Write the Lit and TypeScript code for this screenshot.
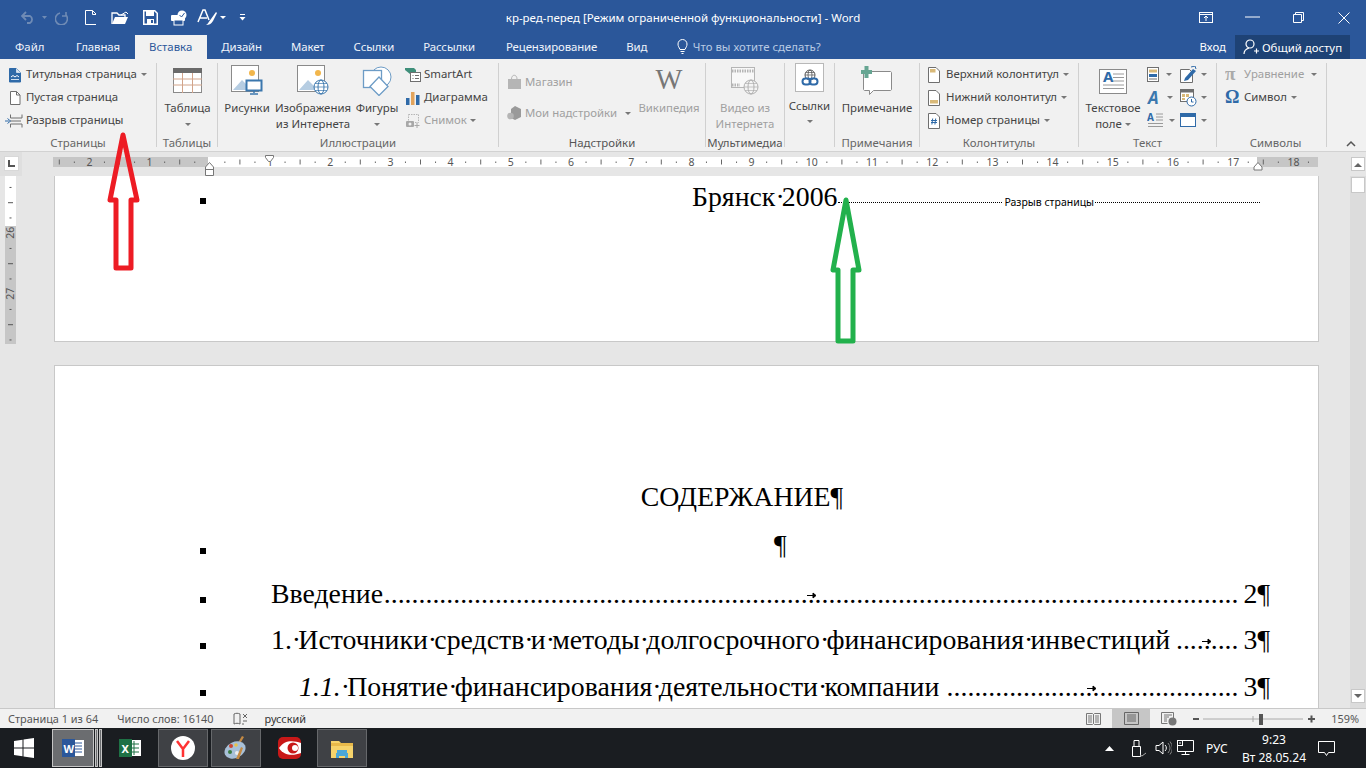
import { LitElement, html, svg, css } from "lit";
import { customElement } from "lit/decorators.js";

const I = (w: number, h: number, body: any) => html`<svg class="svgi" width=${w} height=${h} viewBox="0 0 ${w} ${h}">${body}</svg>`;
const L = "#6f6f6f", B = "#2f6aa8", T = "#d9b978";

const icons: Record<string, any> = {
  cover: I(14, 16, svg`<path d="M1.5 1.5h7l4 4v9.5h-11z" fill="#2f6aa8" stroke="#2f6aa8"/><path d="M8.5 1.5v4h4" fill="#dbe7f3" stroke="#fff" stroke-width=".6"/><path d="M3 10l2-1.5 2 1.5 2-1.5 2 1.5" stroke="#fff" fill="none"/><path d="M3 12.5h8" stroke="#cfe0f0"/>`),
  blank: I(14, 16, svg`<path d="M2.5 1.5h6l3.5 3.5v9.5h-9.5z" fill="#fff" stroke="${L}"/><path d="M8.5 1.5v3.5h3.5" fill="none" stroke="${L}"/>`),
  pbreak: I(18, 16, svg`<path d="M5.5 1.5v3.5h11.5v-3.5M5.5 14.5v-3.5h11.5v3.5" fill="none" stroke="${L}"/><path d="M5 8h11" stroke="${L}"/><path d="M0 8h4M2.5 5.500l3 2.500-3 2.500" fill="none" stroke="${B}"/>`),
  table: I(30, 26, svg`<rect x=".5" y=".5" width="28" height="24" fill="#fff" stroke="#8a8a8a"/><rect x="0" y="0" width="29" height="5" fill="#6a6a6a"/><path d="M0 11h29M0 17h29M9.5 5v20M19.5 5v20" stroke="#d2a48a"/>`),
  pics: I(32, 32, svg`<rect x=".5" y=".5" width="27" height="26" fill="#fff" stroke="#8a8a8a"/><circle cx="21" cy="8" r="3" fill="#f2b64b"/><path d="M2 25l9-10 6 6 3-2 2 6z" fill="#b6cde2"/><rect x="15.5" y="15.5" width="15" height="10" fill="#fff" stroke="#3b77ad" stroke-width="2"/><path d="M23 26v2M19 29h8" stroke="#3b77ad" stroke-width="1.5"/>`),
  online: I(32, 32, svg`<rect x=".5" y=".5" width="27" height="26" fill="#fff" stroke="#8a8a8a"/><circle cx="21" cy="8" r="3" fill="#f2b64b"/><path d="M2 25l9-10 6 6 3-2 2 6z" fill="#b6cde2"/><circle cx="24" cy="22" r="7" fill="#fff" stroke="#3b77ad"/><ellipse cx="24" cy="22" rx="3" ry="7" fill="none" stroke="#3b77ad"/><path d="M17 22h14M18 18.5h12M18 25.5h12" stroke="#3b77ad" stroke-width=".7"/>`),
  shapes: I(32, 30, svg`<circle cx="20" cy="11" r="10" fill="#fff" stroke="#6d9cc6"/><rect x="2.5" y="4.5" width="18" height="17" fill="#fff" stroke="#6d9cc6" stroke-width="1.3"/><path d="M18 11l9 9.5-9 9-9-9z" fill="#fff" stroke="#6d9cc6" stroke-width="1.3"/>`),
  smart: I(16, 16, svg`<path d="M0 1h9l2 2v2l-6 2-5-4z" fill="#3f8f7a"/><rect x="5.5" y="5.5" width="10" height="9" fill="#fff" stroke="${L}"/><path d="M7.5 8.5h1M10 8.5h4M7.5 11.5h1M10 11.5h4" stroke="${L}"/>`),
  chart: I(16, 16, svg`<rect x="1" y="8" width="3.5" height="7" fill="#2f6aa8"/><rect x="6" y="2" width="3.5" height="13" fill="#e2a45c"/><rect x="11" y="5" width="3.5" height="10" fill="#2f6aa8"/>`),
  snap: I(16, 16, svg`<rect x="3.5" y="1.5" width="10" height="8" fill="none" stroke="#b5b5b5" stroke-dasharray="1.5 1"/><rect x="1" y="8" width="8" height="6" rx="1" fill="#a8a8a8"/><circle cx="5" cy="11" r="1.5" fill="#f1f1f1"/><path d="M12 10v5M9.5 12.5h5" stroke="#a8a8a8"/>`),
  store: I(15, 16, svg`<path d="M1 5h13v10h-13z" fill="#b5b5b5"/><path d="M4.5 5c0-5 5.500-5 5.500 0" fill="none" stroke="#b5b5b5"/>`),
  addins: I(15, 16, svg`<path d="M8 1l6 3v8l-6 3-4-2v-9z" fill="#9a9a9a"/><circle cx="3.5" cy="11" r="3.3" fill="#b5b5b5"/>`),
  video: I(28, 28, svg`<rect x=".5" y=".5" width="23" height="20" fill="#f8f8f8" stroke="#b5b5b5"/><path d="M1 4h22" stroke="#b5b5b5" stroke-width="3" stroke-dasharray="1.5 1"/><path d="M1 18h8" stroke="#b5b5b5" stroke-width="3" stroke-dasharray="1.5 1"/><circle cx="20" cy="20" r="7" fill="#f4f4f4" stroke="#b0b0b0"/><ellipse cx="20" cy="20" rx="3" ry="7" fill="none" stroke="#b0b0b0"/><path d="M13 20h14M14 16.5h12M14 23.5h12" stroke="#b0b0b0" stroke-width=".7"/>`),
  links: I(18, 18, svg`<circle cx="9" cy="6" r="5" fill="#fff" stroke="#555"/><ellipse cx="9" cy="6" rx="2" ry="5" fill="none" stroke="#555" stroke-width=".8"/><path d="M4 6h10M5 3.5h8" stroke="#555" stroke-width=".7"/><rect x="1.5" y="9.5" width="8" height="6" rx="3" fill="none" stroke="#2f6aa8" stroke-width="2"/><rect x="8.5" y="9.5" width="8" height="6" rx="3" fill="none" stroke="#2f6aa8" stroke-width="2"/>`),
  comment: I(32, 30, svg`<path d="M3.5 5.5h26a1.5 1.5 0 0 1 1 1v17a1.5 1.5 0 0 1-1 1h-17l-4 4v-4h-5a1.5 1.5 0 0 1-1-1v-17z" fill="#fff" stroke="#8a8a8a"/><path d="M0 4h11v4h-11z" fill="#66a592"/><rect x="3.5" y="0" width="4" height="12" fill="#66a592"/>`),
  header: I(12, 16, svg`<path d="M.5 .5h7.5l3.5 3.5v11.5h-11z" fill="#fff" stroke="${L}"/><rect x="2" y="2" width="5.5" height="3.5" fill="${T}"/>`),
  footer: I(12, 16, svg`<path d="M.5 .5h7.5l3.5 3.5v11.5h-11z" fill="#fff" stroke="${L}"/><rect x="2" y="10" width="8" height="3.5" fill="${T}"/>`),
  pnum: I(12, 16, svg`<path d="M.5 .5h7.5l3.5 3.5v11.5h-11z" fill="#fff" stroke="${L}"/><path d="M4.7 5.5l-.8 6M7.7 5.5l-.8 6M3 7.5h6M3 9.5h6" stroke="#2f6aa8"/>`),
  textbox: I(29, 25, svg`<rect x=".5" y=".5" width="27" height="24" fill="#fff" stroke="#8a8a8a"/><text x="4" y="13" class="ita" fill="#2f6aa8">A</text><path d="M14 5h11M14 8.5h11M14 12h11M4 16h21M4 19.5h21" stroke="#9a9a9a"/>`),
  qparts: I(14, 16, svg`<rect x=".5" y=".5" width="11" height="14" fill="#fff" stroke="${L}"/><rect x="2" y="2.5" width="8" height="3" fill="${T}"/><rect x="2" y="7" width="8" height="3" fill="#2f6aa8"/><path d="M2 12h8" stroke="${L}"/>`),
  wordart: I(16, 16, svg`<text x="1" y="14" class="wa">A</text>`),
  dropcap: I(18, 17, svg`<text x="0" y="9" class="ita2" fill="#2f6aa8">A</text><path d="M9 2h7M9 5h7M9 8h7M1 11.5h15M1 14.5h15" stroke="#9a9a9a"/>`),
  sign: I(17, 17, svg`<path d="M.5 3.5h9l3 3v10h-12z" fill="#fff" stroke="${L}"/><path d="M5 12l8-9 3 2-8 9-4 1z" fill="#2f6aa8"/><path d="M11 1l4-1 1 3" fill="none" stroke="#2f6aa8"/>`),
  date: I(17, 18, svg`<rect x=".5" y=".5" width="13" height="12" fill="#fff" stroke="${L}"/><path d="M0 2h14" stroke="${L}" stroke-width="3"/><rect x="2" y="5" width="3" height="3" fill="${T}"/><rect x="6" y="5" width="3" height="3" fill="${T}"/><rect x="2" y="9" width="3" height="2" fill="${T}"/><circle cx="11.5" cy="12.5" r="4.5" fill="#fff" stroke="#2f6aa8"/><path d="M11.5 10v3h2" stroke="#2f6aa8" fill="none"/>`),
  obj: I(17, 15, svg`<rect x=".5" y=".5" width="15" height="13" fill="#fff" stroke="#2f6aa8"/><rect x="0" y="0" width="16" height="4" fill="#2f6aa8"/>`),
};

const caret = html`<span class="caret"></span>`;
const row = (ic: string, t: string, c = true, cls = "") => html`<div class="row ${cls}">${icons[ic]}${t ? html`<span class="tx">${t}</span>` : ""}${c ? caret : ""}</div>`;
const md = (s: string) => s.split("·").map((p, i) => i === 0 ? p : html`<span class="md">·</span>${p}`);

const rulerMarks = () => {
  const out: any[] = [];
  const X0 = 209.8, P = 60.2, off = 53;
  for (let i = -3; i <= 18; i++) {
    const x = X0 + P * i - off;
    if (i !== 0 && i >= -2) out.push(svg`<text x=${x} y="14" class="rn" text-anchor="middle">${Math.abs(i)}</text>`);
    [[.25, 0], [.5, 1], [.75, 0]].forEach(([f, big]) => {
      const tx = x + P * f;
      if (tx > 1 && tx < 1264) out.push(svg`<rect x=${tx - .5} y=${big ? 7.5 : 9.5} width="1" height=${big ? 5 : 1.5} fill="#666"></rect>`);
    });
  }
  return out;
};

const tocRows = [
  { lead: "Введение", num: "2", arrow: 812, cls: "r1" },
  { lead: "1.·Источники·средств·и·методы·долгосрочного·финансирования·инвестиций ", num: "3", arrow: 1207, cls: "r2" },
  { it: "1.1.", lead: "·Понятие·финансирования·деятельности·компании ", num: "3", arrow: 1092, cls: "r3" },
];

@customElement("app-root")
export class AppRoot extends LitElement {
  static styles = css`
    :host { display:block; position:relative; width:1366px; height:768px; overflow:hidden; font-family:"Noto Sans","Open Sans",sans-serif; font-size:11.4px; color:#444; background:#e6e6e6; }
    .svgi { display:block; flex:none; }
    .app { display:flex; flex-direction:column; height:768px; }
    .title { height:35px; background:#2b579a; color:#fff; display:flex; align-items:center; flex:none; position:relative; }
    .qat { display:flex; align-items:center; padding-left:21px; width:500px; }
    .qb { display:flex; align-items:center; justify-content:center; }
    .q1{width:15px}.q3{width:13px}.q5{width:11px}
    .s6{width:6px;flex:none}.s7{width:7px;flex:none}.s15{width:15px;flex:none}.s13{width:13px;flex:none}.s9{width:9px;flex:none}.s3{width:3px;flex:none}.s14{width:14px;flex:none}.s17{width:17px;flex:none}
    .ttext { position:absolute; inset:0; display:flex; align-items:center; justify-content:center; font-size:11.5px; color:#fff; pointer-events:none; }
    .win { margin-left:auto; display:flex; align-items:center; margin-right:-1px; }
    .wb { width:46px; display:flex; justify-content:center; }
    .tabs { height:24px; background:#2b579a; display:flex; align-items:stretch; flex:none; color:#fff; }
    .tab { padding:0 14.5px 1px; display:flex; align-items:center; justify-content:center; color:#f0f4fa; letter-spacing:-.1px; }
    .tab.file { padding-left:15px; padding-right:17px; letter-spacing:0; }
    .tab.on { background:#f1f1f1; color:#2b579a; padding-right:14.5px; letter-spacing:0; }
    .tab.wide { padding-right:16.5px; }
    .tell { display:flex; align-items:center; gap:5px; margin-left:15px; color:#b9cbe4; padding-bottom:1px; }
    .auth { margin-left:auto; display:flex; align-items:stretch; margin-right:16px; }
    .enter { display:flex; align-items:center; margin-right:9px; padding-bottom:1px; }
    .share { width:115px; background:#1e4275; display:flex; align-items:center; justify-content:center; gap:3px; }
    .ribbon { height:93px; background:#f1f1f1; border-bottom:1px solid #d2d2d2; box-sizing:border-box; flex:none; display:flex; padding-top:4px; position:relative; }
    .group { height:84px; border-right:1px solid #d0d0d0; box-sizing:border-box; display:flex; flex-direction:column; flex:none; }
    .gc { height:72px; display:flex; flex:none; }
    .glabel { height:16px; line-height:16px; text-align:center; color:#666; flex:none; }
    .dk { color:#555; }
    .g1{width:157px}.g2{width:61px}.g3{width:281px}.g4{width:207px}.g5{width:79px}.g6{width:50px}.g7{width:85px}.g8{width:159px}.g9{width:138px}.g10{width:110px}
    .pl8 .gc { padding-left:8px; }
    .col { display:flex; flex-direction:column; }
    .row { display:flex; align-items:center; height:23px; gap:4px; white-space:nowrap; flex:none; }
    .brk { margin-left:-3px; gap:3px; }
    .tx { padding-bottom:2px; }
    .caret { display:inline-block; width:0; height:0; border:3px solid transparent; border-top:3.5px solid #777; border-bottom:0; flex:none; }
    .dis { color:#a0a0a0; }
    .lg { display:flex; flex-direction:column; align-items:center; flex:none; line-height:16px; white-space:nowrap; }
    .lgi { height:36px; display:flex; align-items:center; justify-content:center; flex:none; padding-bottom:1px; }
    .w54{width:54px}.w78{width:78px}.w50{width:50px}.w58{width:58px}.w49{width:49px}.w84{width:84px}.w68{width:68px}
    .ml3 { margin-left:3px; }
    .ml2 { margin-left:2px; }
    .tight .row { gap:3px; }
    .addcol { padding:3.5px 0 0 8px; width:124px; }
    .addcol .row { height:31px; gap:3px; }
    .addcaret { margin-left:5px; }
    .wiki { width:76px; }
    .wglyph { font-family:"Liberation Serif",serif; font-size:28.5px; color:#777; line-height:34px; height:37px; box-sizing:border-box; }
    .box { width:29px; height:29px; background:#fff; border:1px solid #b8b8b8; box-sizing:border-box; display:flex; align-items:center; justify-content:center; }
    .lgi.s { height:35px; padding:0; align-items:flex-start; }
    .links { line-height:15px; }
    .car2 { height:16px; display:flex; align-items:center; }
    .inl { display:inline-flex; align-items:center; gap:3px; }
    .col2 { width:33px; }
    .col3 { width:30px; }
    .col2 .row { width:25px; justify-content:space-between; }
    .col3 .row { width:27px; justify-content:space-between; }
    .wcap .row { gap:6px; }
    .wcap .caret { margin-left:-2px; }
    .pad8 { padding-left:8px; }
    .eqc { margin-left:3px; }
    .pi { font:bold 19px "Liberation Serif",serif; fill:#aaa; }
    .om { font:bold 18px "Liberation Serif",serif; fill:#2f6aa8; }
    .chev { position:absolute; right:10px; top:81px; }
    .rulers { height:24px; flex:none; background:#e6e6e6; display:flex; align-items:flex-start; }
    .corner { width:22px; height:24px; background:#dfdfdf; flex:none; padding:4px 0 0 4px; box-sizing:border-box; margin-right:31px; }
    .corner div { width:15px; height:15px; background:#fff; display:flex; align-items:center; justify-content:center; box-sizing:border-box; border:1px solid #d8d8d8; }
    .rn { font:10.5px "Noto Sans",sans-serif; fill:#555; }
    .ita { font:bold 15px "Noto Sans",sans-serif; }
    .ita2 { font:bold 10px "Noto Sans",sans-serif; }
    .wa { font:italic bold 17px "Noto Sans",sans-serif; fill:#3b77ad; }
    .work { flex:1; display:flex; min-height:0; }
    .gutter { width:54px; flex:none; padding-left:5px; box-sizing:border-box; }
    .vr { width:11px; height:168px; background:#c6c6c6; display:block; }
    .vrn { font:10.5px "Noto Sans",sans-serif; fill:#555; }
    .doc { width:1265px; flex:none; overflow:hidden; }
    .page { background:#fff; border:1px solid #c8c8c8; box-sizing:border-box; font-family:"Liberation Serif",serif; color:#000; font-size:27.8px; position:relative; }
    .md { letter-spacing:-.1em; }
    .p1 { height:166px; border-top:0; margin-bottom:23px; padding:5px 58px 0 145px; }
    .brow { display:flex; align-items:center; height:40px; }
    .bullet { width:6px; height:6px; background:#000; flex:none; }
    .bx { margin-left:486px; white-space:nowrap; margin-bottom:8px; }
    .dotline { flex:1; border-top:1px dotted #000; height:0; display:flex; justify-content:center; margin-top:3px; margin-left:1px; }
    .pb { font:10.5px "Noto Sans",sans-serif; background:#fff; padding:0 1px; color:#000; transform:translateY(-7px); height:13px; line-height:13px; }
    .p2 { height:360px; padding:107px 48px 0 145px; }
    .r { display:flex; align-items:center; height:46.67px; white-space:nowrap; position:relative; }
    .r .bullet { margin-top:12px; }
    .rc { justify-content:center; padding-left:14px; height:47px; }
    .rp { height:50.5px; }
    .rp .bullet { margin-top:12px; }
    .rt { margin-left:65px; white-space:pre; }
    .r2 .rt { margin-left:65px; }
    .r3 .rt { margin-left:93px; }
    .dots { flex:1; overflow:hidden; text-align:right; direction:rtl; min-width:0; }
    .num { margin-left:5px; }
    .par { margin-left:568px; }
    .arrow { position:absolute; top:21px; }
    i { font-style:italic; }
    .scroll { width:16px; margin-left:31px; flex:none; background:#dcdcdc; position:relative; display:flex; flex-direction:column; align-items:center; }
    .sb { width:14px; height:14px; background:#fff; border:1px solid #c8c8c8; box-sizing:border-box; display:flex; align-items:center; justify-content:center; flex:none; }
    .sthumb { height:16px; margin-top:1px; }
    .sup { margin-top:-19px; margin-bottom:5px; }
    .sdown { margin-top:auto; margin-bottom:5px; }
    .status { height:20px; flex:none; background:#f1f1f1; border-top:1px solid #c8c8c8; box-sizing:border-box; display:flex; align-items:center; padding-left:8px; color:#555; font-size:10.9px; }
    .status > span { white-space:nowrap; }
    .m19 { margin-left:19px; }
    .lang { color:#333; margin-left:17px; }
    .sr { margin-left:auto; display:flex; align-items:center; height:100%; }
    .sv { width:38px; height:19px; display:flex; align-items:center; justify-content:center; flex:none; }
    .sv.on { background:#c6c6c6; }
    .zoom { display:flex; align-items:center; margin-left:5px; }
    .pct { margin:0 7px 0 16px; }
    .taskbar { height:40px; flex:none; background:#1a1d21; display:flex; align-items:center; color:#fff; }
    .tbi { display:flex; align-items:center; justify-content:center; height:38px; box-sizing:border-box; flex:none; }
    .start { width:48px; margin-right:4px; }
    .tword { width:42px; background:#6b6d70; border:1px solid #c5c5c5; }
    .stk { width:3px; height:38px; background:#6b6d70; border:1px solid #c5c5c5; box-sizing:border-box; margin-left:1px; flex:none; }
    .texcel { width:50px; margin-left:3px; }
    .tbox { width:50px; background:#3f4145; border:1px solid #66686b; margin-left:3px; }
    .tred { width:56px; }
    .texp { margin-left:0; }
    .tl { font:bold 11px "Noto Sans",sans-serif; fill:#fff; }
    .tray { margin-left:auto; display:flex; align-items:center; }
    .m1 { margin-right:10px; }
    .tu { margin-left:7px; }
    .ts { margin-left:8px; }
    .tn { margin-left:5px; }
    .rus { margin-left:12px; width:26px; font-size:12px; }
    .clock { width:84px; text-align:center; line-height:18px; font-size:12px; padding-top:1px; }
    .notif { margin:0 31px 0 2px; }
    .over { position:absolute; left:0; top:0; pointer-events:none; }
  `;

  render() {
    return html`<div class="app">
      ${this.titlebar()}
      ${this.tabs()}
      ${this.ribbon()}
      <div class="rulers">
        <div class="corner"><div><svg width="7" height="7"><path d="M1 0v6h6" stroke="#555" stroke-width="2" fill="none"/></svg></div></div>
        <svg width="1266" height="24" viewBox="0 0 1266 24">
          <rect x="0" y="5" width="155" height="10" fill="#c6c6c6"/><rect x="155" y="5" width="1049" height="10" fill="#fff"/><rect x="1204" y="5" width="61" height="10" fill="#c6c6c6"/>
          ${rulerMarks()}
          <path d="M212.5 3.5h8v2l-3 4h-2l-3-4z" fill="#fff" stroke="#777"/>
          <path d="M152.5 15l4-4.5 4 4.5v8.5h-8zM152.5 17.5h8" fill="#fff" stroke="#777"/>
          <path d="M1201 18l0-3 4-4.5 4 4.5v3z" fill="#fff" stroke="#777"/>
        </svg>
      </div>
      <div class="work">
        <div class="gutter">${this.vruler()}</div>
        <div class="doc">
          <div class="page p1"><div class="brow"><span class="bullet"></span><span class="bx">${md("Брянск·2006")}</span><span class="dotline"><span class="pb">Разрыв страницы</span></span></div></div>
          <div class="page p2">
            <div class="r rc">СОДЕРЖАНИЕ¶</div>
            <div class="r rp"><span class="bullet"></span><span class="par">¶</span></div>
            ${tocRows.map(r => html`<div class="r ${r.cls}"><span class="bullet"></span><span class="rt">${r.it ? html`<i>${r.it}</i>` : ""}${md(r.lead)}</span><span class="dots">${".".repeat(140)}</span><span class="num">${r.num}¶</span>
              <svg class="arrow" style="left:${r.arrow - 205}px" width="10" height="7"><path d="M0 3.5h7M6 1l3 2.5-3 2.5z" stroke="#000" fill="#000"/></svg></div>`)}
          </div>
        </div>
        <div class="scroll">
          <div class="sb sup"><svg width="8" height="5"><path d="M0 5l4-4 4 4z" fill="#666"/></svg></div>
          <div class="sb sthumb"></div>
          <div class="sb sdown"><svg width="8" height="5"><path d="M0 0l4 4 4-4z" fill="#666"/></svg></div>
        </div>
      </div>
      ${this.status()}
      ${this.taskbar()}
    </div>
    <svg class="over" width="1366" height="768" viewBox="0 0 1366 768" fill="none" stroke-width="5" stroke-linejoin="round">
      <path d="M123 135 110 200h6v68h15v-68h6z" stroke="#ed1c24"/>
      <path d="M846 200 833 270h5v71h15v-71h6z" stroke="#22b14c"/>
    </svg>`;
  }

  vruler() {
    const marks: any[] = [];
    const y26 = 56.7, P = 61;
    for (let i = -1; i <= 2; i++) {
      const y = y26 + P * i;
      if (i === 0 || i === 1) marks.push(svg`<text transform="translate(9 ${y}) rotate(-90)" class="vrn" text-anchor="middle">${26 + i}</text>`);
      [[.25, 0], [.5, 1], [.75, 0]].forEach(([f, b]) => {
        const ty = y + P * f;
        if (ty > 0 && ty < 168) marks.push(svg`<rect x=${b ? 3 : 4.5} y=${ty} width=${b ? 5 : 2} height="1" fill="#555"></rect>`);
      });
    }
    return html`<svg class="vr" width="11" height="168" viewBox="0 0 11 168"><rect width="11" height="50" fill="#fff"/>${marks}</svg>`;
  }

  titlebar() {
    const f = "#6f8bb5";
    return html`<div class="title">
      <div class="qat">
        <span class="qb q1"><svg width="15" height="13"><path d="M5 1 1 5l4 4M1 5h8a4 4 0 0 1 0 7H6" fill="none" stroke="${f}" stroke-width="1.8"/></svg></span>
        <span class="s6"></span><svg width="6" height="4"><path d="M0 0h5l-2.5 3z" fill="${f}"/></svg>
        <span class="s7"></span>
        <span class="qb q3"><svg width="14" height="14"><path d="M5 2a6 6 0 1 0 6 2M11 1v4h-4" fill="none" stroke="${f}" stroke-width="1.6"/></svg></span>
        <span class="s17"></span>
        <span class="qb q5"><svg width="12" height="15"><path d="M.5 .5h7l4 4v10h-11z" fill="none" stroke="#fff"/><path d="M7.5 .5v4h4" fill="none" stroke="#fff"/></svg></span>
        <span class="s15"></span>
        <svg width="18" height="14"><path d="M1 13V2h5l2 2h6v2" fill="none" stroke="#fff" stroke-width="1.3"/><path d="M1 13l3-7h13l-3 7z" fill="#fff"/><path d="M10 4l5-3 2 2" stroke="#fff" fill="none"/></svg>
        <span class="s14"></span>
        <svg width="15" height="15"><path d="M.75 .75h11l2.5 2.5v11h-13.5z" fill="none" stroke="#fff" stroke-width="1.5"/><rect x="3" y="1" width="8" height="5" fill="#fff"/><rect x="4" y="9" width="7" height="5" fill="#fff"/><rect x="8" y="10" width="2" height="3" fill="#2b579a"/></svg>
        <span class="s13"></span>
        <svg width="17" height="16"><rect x="0" y="5" width="14" height="6" rx="1" fill="#fff"/><rect x="3" y="10" width="9" height="5" fill="#2b579a" stroke="#fff"/><circle cx="11" cy="5" r="4.5" fill="#fff"/><path d="M8.5 5l2 2 3-4" stroke="#2b579a" fill="none"/></svg>
        <span class="s9"></span>
        <svg width="20" height="18"><path d="M1 13 6 1h2l4 10M3 9h7" fill="none" stroke="#fff" stroke-width="1.5"/><path d="M9 16c2-1 3-4 5-6l5-7 1 1-4 8c-2 3-4 4-7 4z" fill="#fff"/></svg>
        <span class="s3"></span>
        <svg width="6" height="4"><path d="M0 0h6l-3 3z" fill="#fff"/></svg>
        <span class="s13"></span>
        <svg width="7" height="7"><path d="M1 .5h5" stroke="#fff"/><path d="M.5 3h6l-3 3.5z" fill="#fff"/></svg>
      </div>
      <div class="ttext">кр-ред-перед [Режим ограниченной функциональности] - Word</div>
      <div class="win">
        <span class="wb"><svg width="14" height="11"><rect x=".5" y=".5" width="13" height="10" fill="none" stroke="#fff"/><path d="M0 2.5h14M7 9V4M5 6l2-2 2 2" stroke="#fff" fill="none"/></svg></span>
        <span class="wb"><svg width="15" height="3"><path d="M0 1h15" stroke="#fff"/></svg></span>
        <span class="wb"><svg width="11" height="11"><path d="M.5 2.5h8v8h-8zM2.5 2.5v-2h8v8h-2" fill="none" stroke="#fff"/></svg></span>
        <span class="wb"><svg width="12" height="12"><path d="M.5 .5l11 11M11.5 .5l-11 11" stroke="#fff"/></svg></span>
      </div>
    </div>`;
  }

  tabs() {
    const rest = ["Дизайн", "Макет", "Ссылки"];
    return html`<div class="tabs">
      <div class="tab file">Файл</div>
      <div class="tab">Главная</div>
      <div class="tab on">Вставка</div>
      ${rest.map(x => html`<div class="tab">${x}</div>`)}
      <div class="tab wide">Рассылки</div>
      <div class="tab">Рецензирование</div>
      <div class="tab">Вид</div>
      <div class="tell"><svg width="11" height="15"><path d="M3 10.5C2 8 1 7.5 1 5a4.5 4.5 0 0 1 9 0c0 2.500-1 3-2 5.500zM3.500 12.500h4M4.500 14.500h2" fill="none" stroke="#fff"/></svg><span>Что вы хотите сделать?</span></div>
      <div class="auth"><div class="enter">Вход</div>
        <div class="share"><svg width="16" height="16"><circle cx="7" cy="5" r="4" fill="none" stroke="#fff" stroke-width="1.2"/><path d="M1 15c0-3 2-5 5-6M11 12h5M13.5 9.5v5" fill="none" stroke="#fff" stroke-width="1.2"/></svg><span>Общий доступ</span></div></div>
    </div>`;
  }

  ribbon() {
    return html`<div class="ribbon">
      <div class="group g1 pl8"><div class="gc"><div class="col">
        ${row("cover", "Титульная страница")}${row("blank", "Пустая страница", false)}${row("pbreak", "Разрыв страницы", false, "brk")}
      </div></div><div class="glabel">Страницы</div></div>

      <div class="group g2"><div class="gc"><div class="lg w58"><div class="lgi ml3">${icons.table}</div><span class="ml3">Таблица</span><span class="car2 ml3">${caret}</span></div></div><div class="glabel">Таблицы</div></div>

      <div class="group g3"><div class="gc">
        <div class="lg w54 ml2"><div class="lgi">${icons.pics}</div><span>Рисунки</span></div>
        <div class="lg w78"><div class="lgi">${icons.online}</div><span>Изображения</span><span>из Интернета</span></div>
        <div class="lg w50"><div class="lgi">${icons.shapes}</div><span>Фигуры</span><span class="car2">${caret}</span></div>
        <div class="col ml3 tight">${row("smart", "SmartArt", false)}${row("chart", "Диаграмма", false)}${row("snap", "Снимок", true, "dis")}</div>
      </div><div class="glabel">Иллюстрации</div></div>

      <div class="group g4"><div class="gc">
        <div class="col addcol dis">
          ${row("store", "Магазин", false)}
          <div class="row">${icons.addins}<span class="tx">Мои надстройки</span><span class="caret addcaret"></span></div>
        </div>
        <div class="lg wiki dis"><div class="wglyph">W</div><span>Википедия</span></div>
      </div><div class="glabel dk">Надстройки</div></div>

      <div class="group g5"><div class="gc"><div class="lg w78 dis"><div class="lgi">${icons.video}</div><span>Видео из</span><span>Интернета</span></div></div><div class="glabel dk">Мультимедиа</div></div>

      <div class="group g6"><div class="gc"><div class="lg w49 links"><div class="lgi s"><div class="box">${icons.links}</div></div><span>Ссылки</span><span class="car2">${caret}</span></div></div></div>

      <div class="group g7"><div class="gc"><div class="lg w84"><div class="lgi">${icons.comment}</div><span>Примечание</span></div></div><div class="glabel">Примечания</div></div>

      <div class="group g8 pl8"><div class="gc"><div class="col wcap">
        ${row("header", "Верхний колонтитул")}${row("footer", "Нижний колонтитул")}${row("pnum", "Номер страницы")}
      </div></div><div class="glabel">Колонтитулы</div></div>

      <div class="group g9"><div class="gc">
        <div class="lg w68"><div class="lgi">${icons.textbox}</div><span>Текстовое</span><span class="inl">поле${caret}</span></div>
        <div class="col col2">${row("qparts", "")}${row("wordart", "")}${row("dropcap", "")}</div>
        <div class="col col3">${row("sign", "")}${row("date", "")}${row("obj", "")}</div>
      </div><div class="glabel">Текст</div></div>

      <div class="group g10 pad8"><div class="gc"><div class="col">
        <div class="row dis"><svg width="15" height="15"><text x="0" y="13" class="pi">π</text></svg><span class="tx">Уравнение</span><span class="caret eqc"></span></div>
        <div class="row"><svg width="15" height="15"><text x="0" y="13" class="om">Ω</text></svg><span class="tx">Символ</span>${caret}</div>
      </div></div><div class="glabel">Символы</div></div>

      <svg class="chev" width="10" height="7"><path d="M1 6l4-4 4 4" fill="none" stroke="#555" stroke-width="1.5"/></svg>
    </div>`;
  }

  status() {
    return html`<div class="status">
      <span>Страница 1 из 64</span><span class="m19">Число слов: 16140</span>
      <svg class="m19" width="15" height="13"><path d="M7 2C5 1 3 1 1 2v10c2-1 4-1 6 0M7 2v10M9 12h2" fill="none" stroke="#666"/><path d="M10 2l4 4M14 2l-4 4M10 9h4" stroke="#666"/></svg>
      <span class="lang">русский</span>
      <div class="sr">
        <span class="sv"><svg width="15" height="13"><path d="M.5 1.5h6l1 1 1-1h6v11h-6l-1-1-1 1h-6zM7.5 2.5v9M2 4h4M2 6h4M2 8h4M2 10h4M9 4h4M9 6h4M9 8h4M9 10h4" fill="none" stroke="#777"/></svg></span>
        <span class="sv on"><svg width="15" height="13"><path d="M.5 .5h14v12h-14zM3 3h9M3 5h9M3 7h9M3 9h9" fill="none" stroke="#666"/></svg></span>
        <span class="sv"><svg width="16" height="14"><path d="M.5 .5h12v6M.5 .5v11h6M3 3h8M3 5h5M3 7h3M3 9h3" fill="none" stroke="#777"/><circle cx="11.5" cy="9.5" r="4" fill="#777"/></svg></span>
        <div class="zoom"><svg width="122" height="14"><path d="M0 7h6M115 7h7M118.5 3.5v7" stroke="#555" stroke-width="2" fill="none"/><path d="M10 7h100" stroke="#aaa"/><path d="M60 4v6" stroke="#aaa"/><rect x="66" y="2" width="4" height="11" fill="#555"/></svg></div>
        <span class="pct">159%</span>
      </div>
    </div>`;
  }

  taskbar() {
    return html`<div class="taskbar">
      <div class="tbi start"><svg width="20" height="20"><path d="M0 3l8.5-1.300v7.800H0zM9.500 1.500 20 0v9.500H9.500zM0 10.500h8.500v7.800L0 17zM9.500 10.500H20V20L9.500 18.500z" fill="#fff"/></svg></div>
      <div class="tbi tword"><svg width="23" height="20"><rect x="9" y="2" width="13" height="16" fill="#fff"/><path d="M11 5h9M11 8h9M11 11h9M11 14h9" stroke="#2b579a"/><rect x="0" y="1" width="13" height="18" fill="#2b579a"/><text x="1.5" y="14.5" class="tl">W</text></svg></div>
      <span class="stk"></span><span class="stk"></span>
      <div class="tbi texcel"><svg width="23" height="20"><rect x="9" y="2" width="13" height="16" fill="#fff"/><path d="M11 6h9M11 10h9M11 14h9M15 3v14" stroke="#1e7145"/><rect x="0" y="1" width="13" height="18" fill="#1e7145"/><text x="2.5" y="14.5" class="tl">X</text></svg></div>
      <div class="tbi tbox"><svg width="24" height="24"><circle cx="12" cy="12" r="12" fill="#fff"/><path d="M6 5l6 8 6-8M12 13v8" fill="none" stroke="#f33" stroke-width="2.5"/></svg></div>
      <div class="tbi tbox"><svg width="26" height="26"><path d="M19 1l2 1-6 10-2-1z" fill="#c58a43"/><ellipse cx="12" cy="15" rx="11" ry="8" fill="#a8c0d8" transform="rotate(-25 12 15)"/><circle cx="7" cy="17" r="2" fill="#3a7d44"/><circle cx="8" cy="11" r="2" fill="#c43"/><circle cx="13" cy="10" r="1.8" fill="#e8c24a"/><circle cx="14" cy="18" r="2" fill="#eee"/><path d="M13 24l5-12 2 1-4 11z" fill="#c58a43"/></svg></div>
      <div class="tbi tred"><svg width="23" height="22"><rect width="23" height="22" rx="5" fill="#c81818"/><path d="M1 11c5-8 14-8 22-5v10c-8 3-17 3-22-5z" fill="#fff"/><circle cx="15" cy="11" r="5.5" fill="#c81818"/><circle cx="17" cy="11" r="3" fill="#fff"/></svg></div>
      <div class="tbi tbox texp"><svg width="22" height="19"><path d="M0 2h8l2 2h12v15H0z" fill="#f6d36b"/><path d="M0 4h22v3H0z" fill="#e8b94a"/><path d="M5 14h12v5H14v-2H8v2H5z" fill="#4aa7d8"/><rect x="6" y="11" width="10" height="3" fill="#4aa7d8"/></svg></div>
      <div class="tray">
        <svg class="m1" width="9" height="5"><path d="M0 5l4.5-5 4.5 5z" fill="#fff"/></svg>
        <svg class="tu" width="16" height="17"><path d="M1.5 6.5h8v10h-8zM3 .5h5v6H3z" fill="none" stroke="#fff"/><path d="M9 15l2 1 4-3" fill="none" stroke="#aaa"/></svg>
        <svg class="ts" width="17" height="14"><path d="M1 4.5h3l4-3.500v12l-4-3.500H1z" fill="none" stroke="#fff"/><path d="M10 4a4 4 0 0 1 0 6" fill="none" stroke="#fff"/><path d="M13 2a8 8 0 0 1 0 10M15 .5a10 10 0 0 1 0 13" fill="none" stroke="#888"/></svg>
        <svg class="tn" width="17" height="16"><path d="M5 .5h11.5v11H.5V5M8.5 11.500v3M4.500 14.500h8" fill="none" stroke="#fff"/><rect x=".5" y=".5" width="5" height="5" fill="#1a1d21" stroke="#fff"/><path d="M2 3h2" stroke="#fff"/></svg>
        <div class="rus">РУС</div>
        <div class="clock">9:23<br>Вт 28.05.24</div>
        <svg class="notif" width="17" height="15"><path d="M.5 .5h16v11h-6l-2 3-2-3h-6z" fill="none" stroke="#fff"/></svg>
      </div>
    </div>`;
  }
}
